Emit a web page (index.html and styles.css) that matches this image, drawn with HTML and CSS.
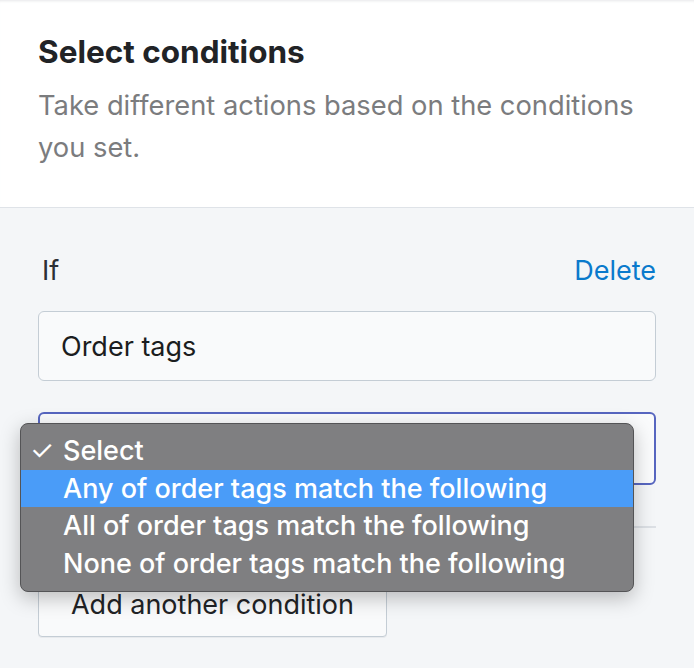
FILE: index.html
```html
<!DOCTYPE html>
<html>
<head>
<meta charset="utf-8">
<link rel="stylesheet" href="styles.css">
</head>
<body>
<div class="page">
  <header class="head">
    <h1 class="title">Select conditions</h1>
    <p class="desc">Take different actions based on the conditions you set.</p>
  </header>
  <section class="body">
    <div class="row">
      <span class="label">If</span>
      <a class="delete">Delete</a>
    </div>
    <div class="field">Order tags</div>
    <div class="field focus"></div>
    <hr class="divider">
    <div class="btn">Add another condition</div>
    <ul class="menu">
      <li class="item"><span class="check">✓</span>Select</li>
      <li class="item active">Any of order tags match the following</li>
      <li class="item">All of order tags match the following</li>
      <li class="item">None of order tags match the following</li>
    </ul>
  </section>
</div>
</body>
</html>
```
FILE: styles.css
```css
html, body { margin: 0; padding: 0; }
body {
  width: 694px;
  height: 668px;
  overflow: hidden;
  background: #f4f6f8;
  font-family: Inter, Roboto, "Liberation Sans", sans-serif;
}
.page { width: 694px; }
.head {
  background: #fff;
  height: 207px;
  border-bottom: 1px solid #dfe3e8;
  padding: 0 38px;
  overflow: hidden;
  box-shadow: inset 0 3px 3px -2px #e6e7e9;
}
.title {
  margin: 0;
  padding-top: 34px;
  font-size: 31.5px;
  line-height: 36px;
  font-weight: 700;
  color: #212326;
}
.desc {
  margin: 15px 0 0;
  font-size: 27.3px;
  line-height: 42px;
  color: #7b7c7e;
  width: 610px;
}
.body {
  position: relative;
  padding: 43px 38px 0;
}
.row {
  display: flex;
  justify-content: space-between;
  align-items: center;
  height: 38px;
  padding-left: 4px;
  font-size: 27px;
}
.label { color: #2c3035; }
.delete { color: #0a7acc; }
.field {
  margin-top: 22px;
  height: 68px;
  border: 1px solid #c4cdd5;
  border-radius: 6px;
  background: #f9fafb;
  display: flex;
  align-items: center;
  padding-left: 22px;
  font-size: 27px;
  color: #1b1d20;
}
.field.focus {
  margin-top: 31px;
  height: 69px;
  border: 2px solid #5766c0;
  background: #fafbfc;
}
.divider {
  margin: 41px 0 0;
  border: 0;
  border-top: 2px solid #dce0e5;
}
.btn {
  margin-top: 43px;
  width: 349px;
  height: 66px;
  box-sizing: border-box;
  border: 1px solid #c4cdd5;
  border-radius: 4px;
  background: #f9fafb;
  display: flex;
  align-items: center;
  justify-content: center;
  font-size: 27px;
  color: #212326;
  box-shadow: 0 1px 0 rgba(22,29,37,0.05);
}
.menu {
  position: absolute;
  left: 20px;
  top: 215px;
  width: 614px;
  height: 169px;
  box-sizing: border-box;
  margin: 0;
  padding: 8px 0;
  list-style: none;
  background: #7f7f81;
  border: 1px solid #545456;
  border-radius: 8px;
  box-shadow: 0 6px 20px rgba(0,0,0,0.25);
}
.item {
  position: relative;
  height: 37.5px;
  line-height: 37.5px;
  padding-left: 42px;
  font-size: 27px;
  font-weight: 500;
  color: #fff;
}
.item.active { background: #4a9cf8; }
.check {
  position: absolute;
  left: 9px;
  font-size: 27px;
  font-weight: 400;
}
```
